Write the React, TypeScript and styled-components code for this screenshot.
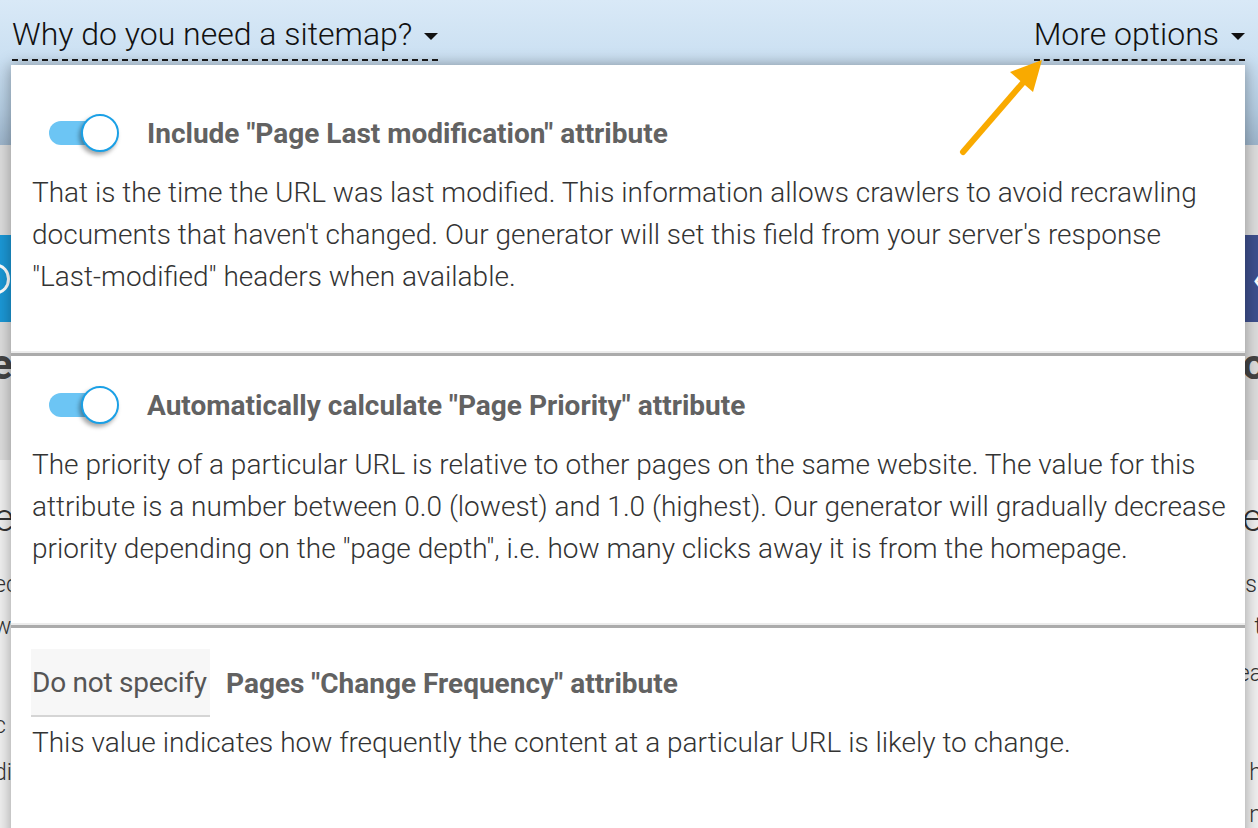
import styled, { createGlobalStyle } from "styled-components";

const GlobalStyle = createGlobalStyle`
  html, body {
    margin: 0;
    padding: 0;
  }
  body {
    font-family: Roboto, "Noto Sans", "Liberation Sans", sans-serif;
    background: #f0f0f0;
    overflow: hidden;
  }
`;

type Option = {
  title: string;
  text: string[];
  kind: "toggle" | "select";
  value?: string;
};

const options: Option[] = [
  {
    kind: "toggle",
    title: 'Include "Page Last modification" attribute',
    text: [
      "That is the time the URL was last modified. This information allows crawlers to avoid recrawling",
      "documents that haven't changed. Our generator will set this field from your server's response",
      '"Last-modified" headers when available.',
    ],
  },
  {
    kind: "toggle",
    title: 'Automatically calculate "Page Priority" attribute',
    text: [
      "The priority of a particular URL is relative to other pages on the same website. The value for this",
      "attribute is a number between 0.0 (lowest) and 1.0 (highest). Our generator will gradually decrease",
      'priority depending on the "page depth", i.e. how many clicks away it is from the homepage.',
    ],
  },
  {
    kind: "select",
    value: "Do not specify",
    title: 'Pages "Change Frequency" attribute',
    text: [
      "This value indicates how frequently the content at a particular URL is likely to change.",
    ],
  },
];

// bits of the page behind the dropdown that peek out at the edges
const peeks: { left: string; right: string; size: number; weight: number; height: number }[] = [
  { left: "e", right: "e", size: 38, weight: 300, height: 56 },
  { left: "ec", right: "si", size: 23, weight: 300, height: 42 },
  { left: "w", right: "t", size: 23, weight: 300, height: 42 },
  { left: "", right: "ea", size: 23, weight: 300, height: 52 },
  { left: "c", right: "", size: 23, weight: 300, height: 52 },
  { left: "di", right: "h", size: 23, weight: 300, height: 42 },
  { left: "l", right: "n", size: 23, weight: 300, height: 42 },
];

export default function App() {
  return (
    <Screen>
      <GlobalStyle />
      <Backdrop>
        <TopBand>
          <TopBar>
            <MenuLink>
              Why do you need a sitemap?
              <Caret />
            </MenuLink>
            <MenuLink>
              More options
              <Caret />
            </MenuLink>
          </TopBar>
        </TopBand>

        <Hero>
          <Banner>
            <BannerButton tone="#1b97d5">
              <Ring />
            </BannerButton>
            <BannerButton tone="#3e4f8d">
              <Chevron>‹</Chevron>
            </BannerButton>
          </Banner>
          <HeroHeading>
            <span>e</span>
            <span>o</span>
          </HeroHeading>
        </Hero>

        <Content>
          {peeks.map((p, i) => (
            <PeekRow key={i} size={p.size} weight={p.weight} rowHeight={p.height}>
              <span>{p.left}</span>
              <span>{p.right}</span>
            </PeekRow>
          ))}
        </Content>
      </Backdrop>

      <Dropdown>
        {options.map((o) => (
          <OptionBlock key={o.title} extraTop={o.kind === "select" ? 6 : 0}>
            <OptionHead>
              {o.kind === "toggle" ? (
                <Toggle>
                  <Track />
                  <Knob />
                </Toggle>
              ) : (
                <SelectBox>{o.value}</SelectBox>
              )}
              <OptionTitle>{o.title}</OptionTitle>
            </OptionHead>
            <OptionText>
              {o.text.map((line) => (
                <div key={line}>{line}</div>
              ))}
            </OptionText>
          </OptionBlock>
        ))}
      </Dropdown>

      <Pointer viewBox="0 0 100 110" width="100" height="110">
        <line x1="8" y1="97" x2="72" y2="23" stroke="#f9aa00" strokeWidth="6" strokeLinecap="round" />
        <polygon points="87,5 55,17 78,37" fill="#f9aa00" />
      </Pointer>
    </Screen>
  );
}

const Screen = styled("div")`
  position: relative;
  width: 1258px;
  height: 828px;
  overflow: hidden;
`;

const Backdrop = styled("div")`
  display: flex;
  flex-direction: column;
`;

const TopBand = styled("div")`
  height: 145px;
  background: linear-gradient(180deg, #d9e9f7 0%, #cbe0f2 40%, #b3cbe0 75%, #9cb4ca 100%);
`;

const TopBar = styled("div")`
  display: flex;
  justify-content: space-between;
  padding: 0 13px 0 12px;
`;

const MenuLink = styled("div")`
  display: flex;
  align-items: center;
  padding: 14px 0 5px;
  line-height: 40px;
  font-size: 32px;
  font-weight: 300;
  color: #111;
  border-bottom: 2px dashed #1a1a1a;
`;

const Caret = styled("span")`
  display: inline-block;
  margin-left: 12px;
  margin-top: 4px;
  border-left: 7px solid transparent;
  border-right: 7px solid transparent;
  border-top: 7px solid #111;
`;

const Hero = styled("div")`
  height: 315px;
  background: #dcdcdc;
  padding-top: 90px;
  box-sizing: border-box;
`;

const Banner = styled("div")`
  display: flex;
  justify-content: space-between;
  height: 87px;
`;

const BannerButton = styled("div")<{ tone: string }>`
  width: 120px;
  background: ${(p) => p.tone};
  display: flex;
  align-items: center;
  justify-content: space-between;
  color: #fff;
`;

const Ring = styled("span")`
  width: 20px;
  height: 24px;
  margin-left: -16px;
  border: 3px solid #fff;
  border-radius: 50%;
`;

const Chevron = styled("span")`
  margin-left: auto;
  margin-right: -4px;
  font-size: 30px;
  font-weight: 700;
`;

const HeroHeading = styled("div")`
  display: flex;
  justify-content: space-between;
  margin: 18px -8px 0 -10px;
  font-size: 42px;
  font-weight: 700;
  line-height: 50px;
  color: #444;
`;

const Content = styled("div")`
  background: #efefef;
  padding-top: 30px;
  height: 400px;
`;

const PeekRow = styled("div")<{ size: number; weight: number; rowHeight: number }>`
  display: flex;
  justify-content: space-between;
  margin: 0 -4px 0 -6px;
  font-size: ${(p) => p.size}px;
  font-weight: ${(p) => p.weight};
  line-height: ${(p) => p.rowHeight}px;
  color: #333;

  &:first-child {
    margin-bottom: 18px;
  }
`;

const Dropdown = styled("div")`
  position: absolute;
  top: 65px;
  left: 11px;
  width: 1234px;
  bottom: -40px;
  background: #fff;
  box-shadow: 0 0 14px rgba(0, 0, 0, 0.35);
  padding-top: 19px;
  box-sizing: border-box;
`;

const OptionBlock = styled("div")<{ extraTop: number }>`
  padding: ${(p) => 15 + p.extraTop}px 21px 55px;

  & + & {
    border-top: 3px solid #ababab;
    box-shadow: 0 -2px 0 #ececec;
  }
`;

const OptionHead = styled("div")`
  display: flex;
  align-items: center;
  min-height: 68px;
`;

const Toggle = styled("div")`
  position: relative;
  width: 70px;
  height: 38px;
  margin: 0 28px 0 17px;
  flex-shrink: 0;
`;

const Track = styled("span")`
  position: absolute;
  left: 0;
  top: 7px;
  width: 58px;
  height: 24px;
  border-radius: 12px;
  background: #6cc5f4;
`;

const Knob = styled("span")`
  position: absolute;
  right: 0;
  top: 0;
  width: 38px;
  height: 38px;
  box-sizing: border-box;
  border-radius: 50%;
  background: #fff;
  border: 2px solid #1aa0e6;
  box-shadow: -2px 3px 4px rgba(0, 0, 0, 0.35);
`;

const SelectBox = styled("div")`
  display: flex;
  align-items: center;
  height: 68px;
  box-sizing: border-box;
  min-width: 179px;
  margin: 0 16px 0 -1px;
  padding: 0 1px;
  background: #f7f7f7;
  border-bottom: 2px solid #d5d5d5;
  font-size: 28px;
  letter-spacing: -0.25px;
  color: #555;
  white-space: nowrap;
`;

const OptionTitle = styled("div")`
  font-size: 28px;
  font-weight: 700;
  color: #626262;
`;

const OptionText = styled("div")`
  margin-top: 5px;
  font-size: 28px;
  line-height: 42px;
  font-weight: 300;
  color: #333;
  white-space: nowrap;
`;

const Pointer = styled("svg")`
  position: absolute;
  left: 955px;
  top: 55px;
`;
